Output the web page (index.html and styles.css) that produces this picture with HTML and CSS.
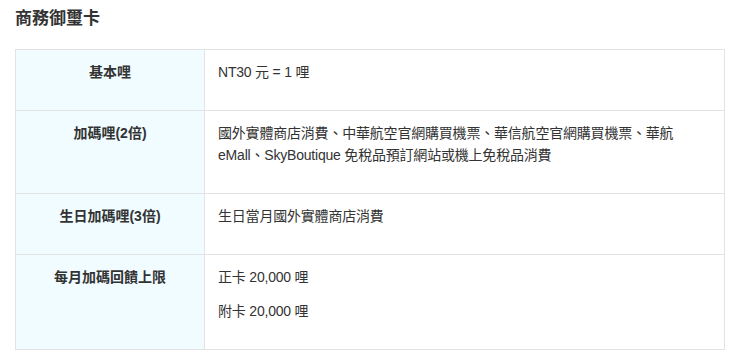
FILE: index.html
```html
<!DOCTYPE html>
<html>
<head>
	<title>商務御璽卡</title>
	<link rel="stylesheet" href="styles.css">
</head>
<body>
<div class="card">
	<h2>商務御璽卡</h2>
	<table class="miles">
		<tr>
			<th>基本哩</th>
			<td><p>NT30 元 = 1 哩</p></td>
		</tr>
		<tr>
			<th>加碼哩(2倍)</th>
			<td><p>國外實體商店消費、中華航空官網購買機票、華信航空官網購買機票、華航eMall、SkyBoutique 免稅品預訂網站或機上免稅品消費</p></td>
		</tr>
		<tr>
			<th>生日加碼哩(3倍)</th>
			<td><p>生日當月國外實體商店消費</p></td>
		</tr>
		<tr>
			<th>每月加碼回饋上限</th>
			<td>
				<p>正卡 20,000 哩</p>
				<p>附卡 20,000 哩</p>
			</td>
		</tr>
	</table>
</div>
</body>
</html>
```

FILE: styles.css
```css
body{
	margin: 0;
	background-color: #fff;
	font-family: "Liberation Sans", "Noto Sans CJK TC", sans-serif;
	color: #333;
}
.card{
	padding: 8px 15px 0 15px;
}
h2{
	margin: 0 0 19px 0;
	font-size: 17px;
	line-height: 22px;
	font-weight: bold;
	color: #333;
}
.miles{
	width: 710px;
	border-collapse: collapse;
	font-size: 14px;
	line-height: 21.5px;
}
.miles th,
.miles td{
	border: 1px solid #e3e3e3;
	padding: 12px 13px 14px 13px;
	vertical-align: top;
	text-align: left;
}
.miles th{
	width: 162px;
	padding-bottom: 26px;
	background-color: #f0fcff;
	text-align: center;
	font-weight: bold;
}
.miles td{
	letter-spacing: -0.2px;
}
.miles p{
	margin: 0 0 12.5px 0;
}
```
